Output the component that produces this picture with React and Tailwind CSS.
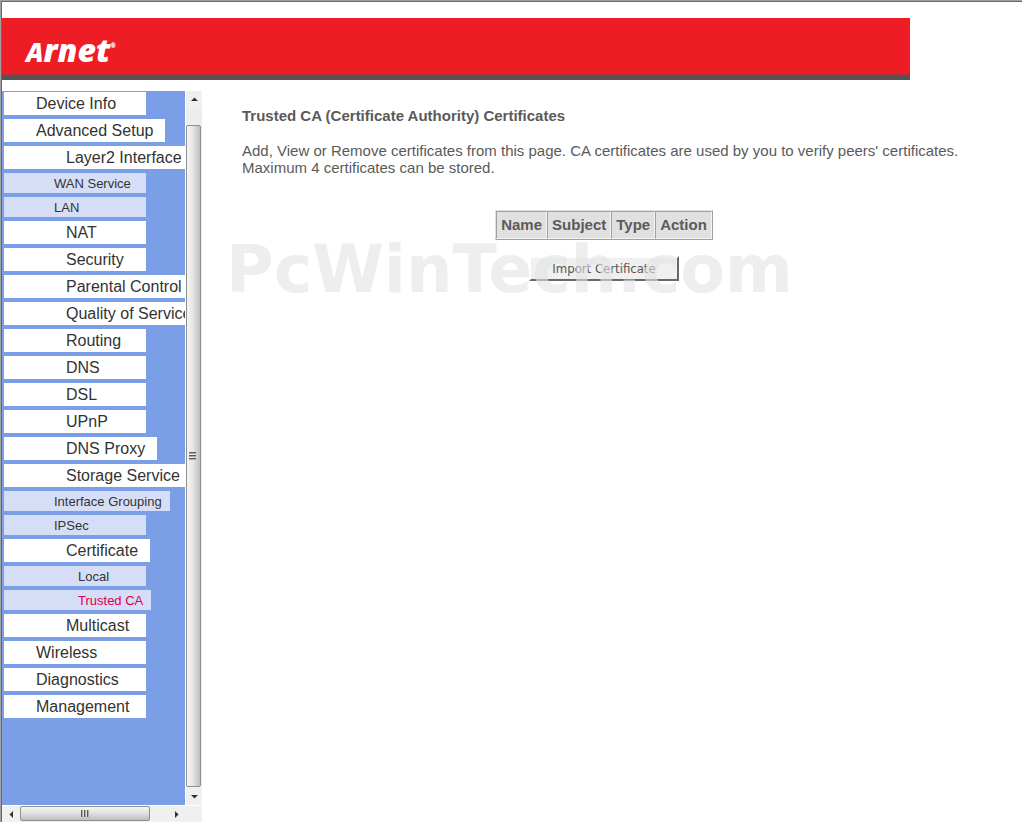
import React from 'react'

const menu = [
  { label: 'Device Info', kind: 'top' },
  { label: 'Advanced Setup', kind: 'top' },
  { label: 'Layer2 Interface', kind: 'folder' },
  { label: 'WAN Service', kind: 'page' },
  { label: 'LAN', kind: 'page' },
  { label: 'NAT', kind: 'folder' },
  { label: 'Security', kind: 'folder' },
  { label: 'Parental Control', kind: 'folder' },
  { label: 'Quality of Service', kind: 'folder' },
  { label: 'Routing', kind: 'folder' },
  { label: 'DNS', kind: 'folder' },
  { label: 'DSL', kind: 'folder' },
  { label: 'UPnP', kind: 'folder' },
  { label: 'DNS Proxy', kind: 'folder' },
  { label: 'Storage Service', kind: 'folder' },
  { label: 'Interface Grouping', kind: 'page' },
  { label: 'IPSec', kind: 'page' },
  { label: 'Certificate', kind: 'folder' },
  { label: 'Local', kind: 'subpage' },
  { label: 'Trusted CA', kind: 'subpage', active: true },
  { label: 'Multicast', kind: 'folder' },
  { label: 'Wireless', kind: 'top' },
  { label: 'Diagnostics', kind: 'top' },
  { label: 'Management', kind: 'top' },
]

const kinds = {
  top: 'h-[23px] pl-8 pr-3 text-base bg-white',
  folder: 'h-[23px] pl-[62px] pr-3 text-base bg-white',
  page: 'h-5 pt-0.5 pl-[50px] pr-2 text-[13px] bg-[#d6def7]',
  subpage: 'h-5 pt-0.5 pl-[74px] pr-2 text-[13px] bg-[#d6def7]',
}

const columns = ['Name', 'Subject', 'Type', 'Action']

function Header() {
  return (
    <header className="mt-4 w-full max-w-[908px] h-[62px] shrink-0 flex items-center pl-6 bg-[#ee1c25] border-b-4 border-[#5d5052] shadow-[inset_0_-2px_0_#a8323a]">
      <a
        href="#home"
        className="flex items-baseline mt-2 font-['Open_Sans',sans-serif] font-extrabold italic text-white leading-8 text-[32px]"
      >
        <span className="text-[26px]">A</span>rnet
        <span className="self-start text-[6px] leading-6" aria-hidden="true">®</span>
      </a>
    </header>
  )
}

function Arrow({ points, label, className }) {
  return (
    <button
      type="button"
      aria-label={label}
      className={`flex items-center justify-center shrink-0 bg-[#f0f0f0] ${className}`}
    >
      <svg width="7" height="7" viewBox="0 0 7 7">
        <polygon points={points} fill="#333" />
      </svg>
    </button>
  )
}

function VerticalBar() {
  return (
    <div className="w-[17px] shrink-0 flex flex-col bg-[#ededee] border-l border-white">
      <Arrow label="Scroll up" points="0,5 3.5,1.5 7,5" className="h-[17px]" />
      <div className="flex-1 flex flex-col pt-[17px] pr-px">
        <div className="flex-1 flex flex-col items-center justify-center gap-px rounded-xs border border-[#8e8f8f] bg-gradient-to-r from-[#f6f6f6] via-[#e4e4e6] to-[#bcbdc2]">
          <i className="w-[7px] h-0.5 mr-0.5 bg-[#5c5c5c] border-b border-[#aaa]" />
          <i className="w-[7px] h-0.5 mr-0.5 bg-[#5c5c5c] border-b border-[#aaa]" />
          <i className="w-[7px] h-0.5 mr-0.5 bg-[#5c5c5c] border-b border-[#aaa]" />
        </div>
      </div>
      <Arrow label="Scroll down" points="0,2 3.5,5.5 7,2" className="h-[18px]" />
    </div>
  )
}

function HorizontalBar() {
  return (
    <div className="h-[17px] shrink-0 flex bg-[#f0f0f0] pr-[17px] border-t border-white">
      <Arrow label="Scroll left" points="5,0 1.5,3.5 5,7" className="w-[18px]" />
      <div className="flex-1 flex pr-[18px]">
        <div className="flex-1 h-[15px] flex items-center justify-center gap-px rounded-xs border border-[#8e8f8f] bg-gradient-to-b from-[#f6f6f6] via-[#e0e0e2] to-[#bcbdc2]">
          <i className="w-0.5 h-[7px] bg-[#5c5c5c] border-r border-[#aaa]" />
          <i className="w-0.5 h-[7px] bg-[#5c5c5c] border-r border-[#aaa]" />
          <i className="w-0.5 h-[7px] bg-[#5c5c5c] border-r border-[#aaa]" />
        </div>
      </div>
      <Arrow label="Scroll right" points="2,0 5.5,3.5 2,7" className="w-[17px]" />
    </div>
  )
}

function Sidebar() {
  return (
    <aside className="w-[200px] shrink-0 flex flex-col">
      <div className="flex-1 flex">
        <nav className="flex-1 min-w-0 overflow-hidden bg-[#7a9fe6] pt-px pl-0.5">
          <ul className="flex flex-col items-start gap-1">
            {menu.map(item => (
              <li key={item.label}>
                <a
                  href="#menu"
                  className={`flex items-center min-w-[142px] whitespace-nowrap ${kinds[item.kind]} ${item.active ? 'text-[#d8004f]' : 'text-[#333]'}`}
                >
                  {item.label}
                </a>
              </li>
            ))}
          </ul>
        </nav>
        <VerticalBar />
      </div>
      <HorizontalBar />
    </aside>
  )
}

function Content() {
  return (
    <main className="flex-1 min-w-0 pt-4 pl-10 pr-14 text-[15px] leading-[17px] text-[#5a5a5a]">
      <h1 className="font-bold">Trusted CA (Certificate Authority) Certificates</h1>

      <p className="mt-[18px]">
        Add, View or Remove certificates from this page. CA certificates are used by you to verify peers' certificates.
        <br />
        Maximum 4 certificates can be stored.
      </p>

      <div className="relative mt-[34px] flex flex-col items-center">
        <table className="border-separate border-spacing-0 border border-t-[#e0e0e0] border-l-[#e0e0e0] border-b-[#a0a0a0] border-r-[#a0a0a0]">
          <thead>
            <tr>
              {columns.map(name => (
                <th
                  key={name}
                  scope="col"
                  className="h-7 px-1 pb-0.5 bg-[#e0e0e0] border border-t-[#a0a0a0] border-l-[#a0a0a0] border-b-[#f4f4f4] border-r-[#f4f4f4]"
                >
                  {name}
                </th>
              ))}
            </tr>
          </thead>
        </table>

        <button
          type="button"
          className="mt-4 w-[150px] h-[25px] bg-[#f0f0f0] border-2 border-t-white border-l-white border-b-[#696969] border-r-[#696969] font-['DejaVu_Sans_Condensed','DejaVu_Sans',sans-serif] text-[13px] text-[#555]"
        >
          Import Certificate
        </button>

        <div className="absolute top-[22px] -left-4 font-['DejaVu_Sans',sans-serif] font-bold text-[65px] leading-[76px] whitespace-nowrap text-[#e3e3e3]/60 pointer-events-none">
          PcWinTech.com
        </div>
      </div>
    </main>
  )
}

export default function App() {
  return (
    <div className="min-h-screen flex flex-col bg-white border-t border-l border-[#a0a0a0] font-['Liberation_Sans',Arial,sans-serif]">
      <div className="flex-1 flex flex-col border-t border-l border-[#696969]">
        <Header />
        <div className="flex-1 flex mt-[11px]">
          <Sidebar />
          <Content />
        </div>
      </div>
    </div>
  )
}
